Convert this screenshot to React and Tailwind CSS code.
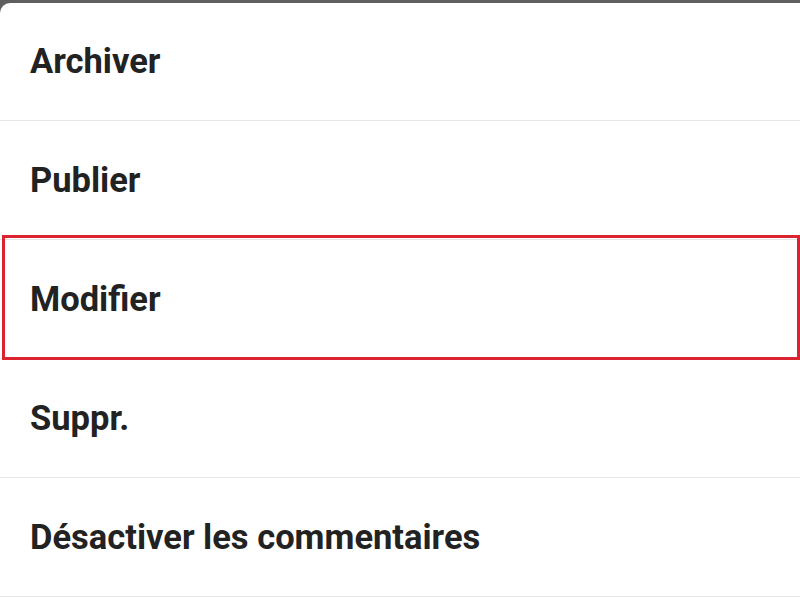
const items = ["Archiver", "Publier", "Modifier", "Suppr.", "Désactiver les commentaires"];

export default function App() {
  return (
    <div className="w-[800px] h-[606px] bg-[#5f5f5f] pt-[3px] overflow-hidden" style={{ fontFamily: "Roboto, 'Liberation Sans', sans-serif" }}>
      <div className="bg-white h-full rounded-tl-[10px] flex flex-col">
        {items.map((label, i) => (
          <div
            key={label}
            className={`relative flex items-center pl-[30px] border-b border-[#e6e6e6] ${i === 0 ? "h-[118px]" : "h-[119px]"}`}
          >
            <span className="text-[34.5px] font-bold text-[#222222] leading-none">{label}</span>
            {label === "Modifier" && (
              <div className="absolute left-[2px] right-0 top-[-5px] bottom-[-2px] border-[3px] border-[#dc2430]" />
            )}
          </div>
        ))}
      </div>
    </div>
  );
}
